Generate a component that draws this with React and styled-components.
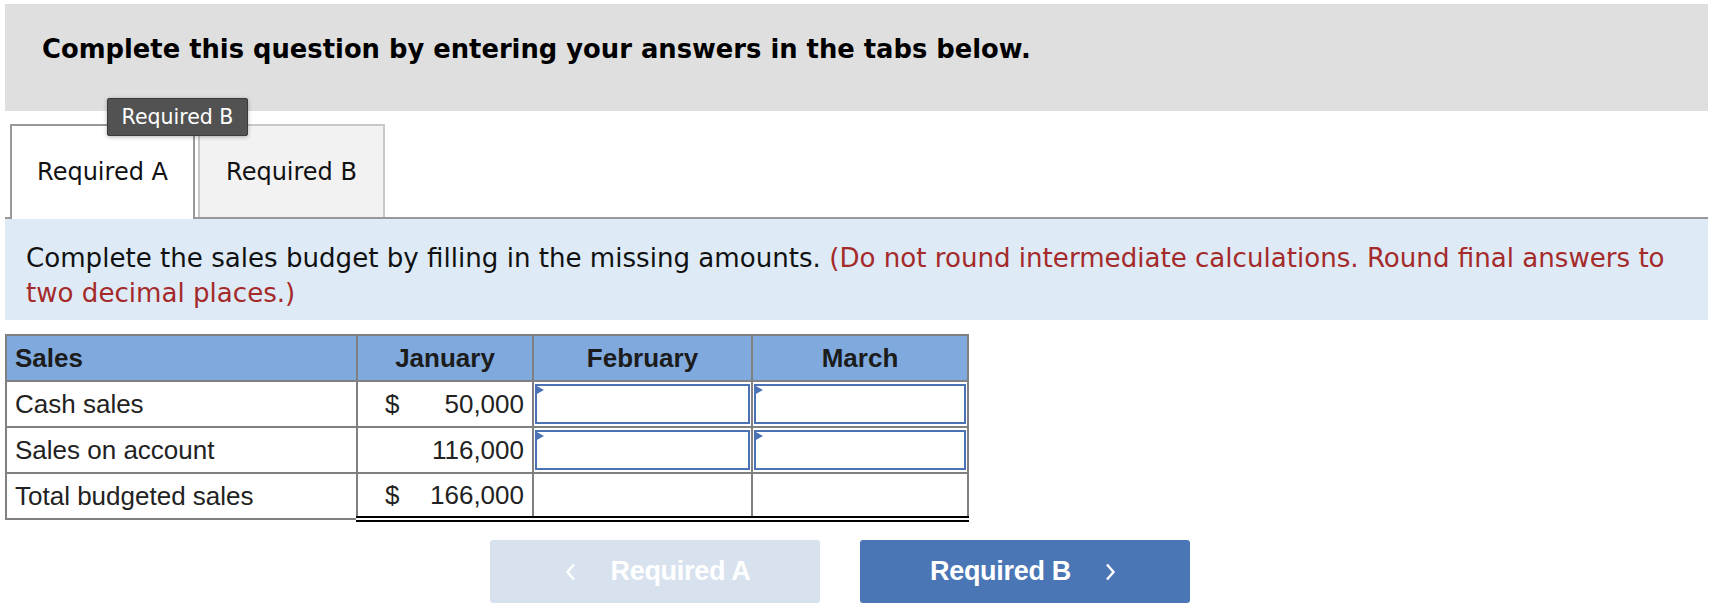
import React from 'react';
import styled, { createGlobalStyle } from 'styled-components';

const GlobalStyle = createGlobalStyle`
  body {
    margin: 0;
    background: #fff;
    font-family: "DejaVu Sans", Verdana, sans-serif;
  }
`

const Page = styled.div`
  padding: 4px 8px 0 5px;
  width: 1703px;
`

const Banner = styled.div`
  background: #dfdfdf;
  height: 107px;
  padding: 30px 0 0 37px;
  box-sizing: border-box;
  h2 {
    margin: 0;
    font-size: 25.8px;
    line-height: 30px;
    font-weight: bold;
    color: #000;
  }
`

const TabBar = styled.div`
  position: relative;
  display: flex;
  align-items: flex-end;
  gap: 3px;
  height: 108px;
  padding-left: 5px;
  border-bottom: 2px solid #999;
  box-sizing: border-box;
`

const Tab = styled.div`
  display: flex;
  align-items: center;
  justify-content: center;
  width: ${p => p.$w}px;
  height: ${p => p.$active ? 95 : 93}px;
  margin-bottom: ${p => p.$active ? -2 : 0}px;
  box-sizing: border-box;
  border: 2px solid ${p => p.$active ? '#999' : '#c8c8c8'};
  border-bottom: none;
  background: ${p => p.$active ? '#fff' : '#f2f2f2'};
  font-size: 24px;
  color: #111;
  padding-bottom: ${p => p.$active ? 2 : 0}px;
`

const Tooltip = styled.div`
  position: absolute;
  top: -13px;
  left: 102px;
  width: 141px;
  height: 38px;
  box-sizing: border-box;
  display: flex;
  align-items: center;
  justify-content: center;
  background: #525252;
  border: 1px solid #3a3a3a;
  border-radius: 2px;
  box-shadow: 0 1px 4px rgba(0,0,0,.3);
  color: #fff;
  font-size: 20.5px;
`

const Instructions = styled.div`
  background: #deebf7;
  padding: 22px 20px 9px 21px;
  font-size: 26.1px;
  line-height: 35px;
  color: #111;
  span {
    color: #a52a2a;
  }
`

const Table = styled.table`
  margin-top: 14px;
  border-collapse: collapse;
  font-family: "Liberation Sans", Arial, sans-serif;
  font-size: 26px;
  color: #222;
  td, th {
    height: 46px;
    box-sizing: border-box;
    padding: 0;
  }
`

const HeadCell = styled.th`
  background: #80a9dd;
  border: 2px solid #808080;
  font-weight: bold;
  color: #1c1c1c;
  text-align: ${p => p.$left ? 'left' : 'center'};
  padding-left: ${p => p.$left ? 8 : 0}px !important;
  width: ${p => p.$w}px;
`

const LabelCell = styled.td`
  border: 2px solid #808080;
  padding-left: 8px !important;
`

const AmountCell = styled.td`
  border: 2px solid #808080;
  ${p => p.$topRule && 'border-top: 2px solid #000;'}
  ${p => p.$double && 'border-bottom: 6px double #000;'}
  padding: 0 8px 0 27px !important;
  div {
    display: flex;
    justify-content: space-between;
  }
`

const BlankCell = styled.td`
  border: 2px solid #808080;
  border-top: 2px solid #000;
  border-bottom: 6px double #000;
`

const InputCell = styled.td`
  border: 2px solid #808080;
  padding: 1px !important;
`

const InputBox = styled.div`
  position: relative;
  height: 40px;
  border: 2px solid #4a72b4;
  box-sizing: border-box;
  background: #fff;
  &::before {
    content: '';
    position: absolute;
    top: -1px;
    left: -2px;
    border-top: 5px solid transparent;
    border-bottom: 5px solid transparent;
    border-left: 9px solid #4a72b4;
  }
`

const Nav = styled.div`
  display: flex;
  gap: 40px;
  margin: 18px 0 0 485px;
`

const NavButton = styled.button`
  display: flex;
  align-items: center;
  justify-content: center;
  gap: 34px;
  width: 330px;
  height: 63px;
  border: none;
  border-radius: 3px;
  background: ${p => p.$disabled ? '#d8e2ef' : '#4a76b5'};
  color: #fff;
  font-family: "Liberation Sans", Arial, sans-serif;
  font-weight: bold;
  font-size: 27px;
  letter-spacing: -0.3px;
  cursor: ${p => p.$disabled ? 'default' : 'pointer'};
  padding: 0 ${p => p.$disabled ? 0 : 4}px 0 ${p => p.$disabled ? 6 : 0}px;
`

const Chevron = ({ dir }) => (
  <svg width="11" height="18" viewBox="0 0 11 18">
    <path
      d={dir === 'left' ? 'M9 1.5 L2.5 9 L9 16.5' : 'M2 1.5 L8.5 9 L2 16.5'}
      fill="none"
      stroke="#fff"
      strokeWidth="2.4"
    />
  </svg>
)

const Amount = ({ dollar, value }) => (
  <div><span>{dollar ? '$' : ''}</span><span>{value}</span></div>
)

export default function App() {
  return (
    <Page>
      <GlobalStyle />
      <Banner>
        <h2>Complete this question by entering your answers in the tabs below.</h2>
      </Banner>
      <TabBar>
        <Tab $active $w={185}>Required A</Tab>
        <Tab $w={187}>Required B</Tab>
        <Tooltip>Required B</Tooltip>
      </TabBar>
      <Instructions>
        Complete the sales budget by filling in the missing amounts. <span>(Do not round intermediate calculations. Round final answers to two decimal places.)</span>
      </Instructions>
      <Table>
        <thead>
          <tr>
            <HeadCell $left $w={351}>Sales</HeadCell>
            <HeadCell $w={176}>January</HeadCell>
            <HeadCell $w={219}>February</HeadCell>
            <HeadCell $w={216}>March</HeadCell>
          </tr>
        </thead>
        <tbody>
          <tr>
            <LabelCell>Cash sales</LabelCell>
            <AmountCell><Amount dollar value="50,000" /></AmountCell>
            <InputCell><InputBox /></InputCell>
            <InputCell><InputBox /></InputCell>
          </tr>
          <tr>
            <LabelCell>Sales on account</LabelCell>
            <AmountCell><Amount value="116,000" /></AmountCell>
            <InputCell><InputBox /></InputCell>
            <InputCell><InputBox /></InputCell>
          </tr>
          <tr>
            <LabelCell>Total budgeted sales</LabelCell>
            <AmountCell $topRule $double><Amount dollar value="166,000" /></AmountCell>
            <BlankCell />
            <BlankCell />
          </tr>
        </tbody>
      </Table>
      <Nav>
        <NavButton $disabled><Chevron dir="left" />Required A</NavButton>
        <NavButton>Required B<Chevron dir="right" /></NavButton>
      </Nav>
    </Page>
  );
}
